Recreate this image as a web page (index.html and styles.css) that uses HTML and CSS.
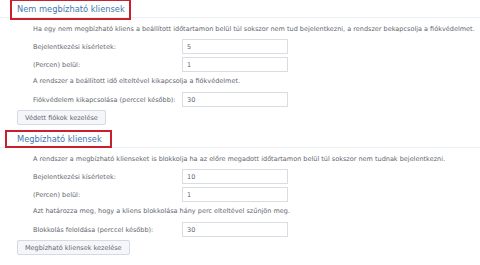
FILE: index.html
```html
<!DOCTYPE html>
<html lang="hu">
<head>
    <meta charset="UTF-8">
    <title>Automatikus blokkolás</title>
    <link rel="stylesheet" href="styles.css">
</head>
<body>
    <div class="page">
        <div class="section">
            <div class="section-head">
                <span class="title title-first">Nem megbízható kliensek</span>
            </div>
            <div class="section-body">
                <p class="desc">Ha egy nem megbízható kliens a beállított időtartamon belül túl sokszor nem tud bejelentkezni, a rendszer bekapcsolja a fiókvédelmet.</p>
                <div class="field">
                    <label>Bejelentkezési kísérletek:</label>
                    <input type="text" value="5">
                </div>
                <div class="field">
                    <label>(Percen) belül:</label>
                    <input type="text" value="1">
                </div>
                <p class="note">A rendszer a beállított idő elteltével kikapcsolja a fiókvédelmet.</p>
                <div class="field">
                    <label>Fiókvédelem kikapcsolása (perccel később):</label>
                    <input type="text" value="30">
                </div>
            </div>
            <button class="btn">Védett fiókok kezelése</button>
        </div>

        <div class="section">
            <div class="section-head">
                <span class="title title-second">Megbízható kliensek</span>
            </div>
            <div class="section-body">
                <p class="desc">A rendszer a megbízható klienseket is blokkolja ha az előre megadott időtartamon belül túl sokszor nem tudnak bejelentkezni.</p>
                <div class="field">
                    <label>Bejelentkezési kísérletek:</label>
                    <input type="text" value="10">
                </div>
                <div class="field">
                    <label>(Percen) belül:</label>
                    <input type="text" value="1">
                </div>
                <p class="note">Azt határozza meg, hogy a kliens blokkolása hány perc elteltével szűnjön meg.</p>
                <div class="field">
                    <label>Blokkolás feloldása (perccel később):</label>
                    <input type="text" value="30">
                </div>
            </div>
            <button class="btn">Megbízható kliensek kezelése</button>
        </div>
    </div>
</body>
</html>
```

FILE: styles.css
```css
:root {
    --title-color: #4277ad;
    --text-color: #5f6670;
    --line-color: #eceff2;
    --input-border: #d9dde2;
    --mark-color: #c9202f;
}

* {
    margin: 0;
    padding: 0;
    box-sizing: border-box;
}

body {
    font-family: 'DejaVu Sans', Verdana, sans-serif;
    background-color: white;
    color: var(--text-color);
    font-size: 6.5px;
}

.page {
    width: 480px;
    height: 265px;
    overflow: hidden;
}

.section {
    height: 130px;
}

.section-head {
    border-bottom: 1px solid var(--line-color);
    height: 18px;
    display: flex;
    align-items: flex-end;
}

.title {
    display: inline-block;
    color: var(--title-color);
    font-size: 8.3px;
    border: 2px solid var(--mark-color);
}

.title-first {
    margin-left: 10px;
    padding: 0 4px 0 5px;
    margin-bottom: -3px;
    height: 21px;
    line-height: 17px;
}

.title-second {
    margin-left: 5px;
    padding: 0 8px 0 10px;
    margin-bottom: -1px;
    height: 18px;
    line-height: 14px;
}

.section-body {
    padding-left: 33px;
}

.desc {
    margin-top: 5px;
    height: 13px;
    line-height: 13px;
}

.note {
    height: 18px;
    line-height: 18px;
}

.field {
    display: flex;
    align-items: center;
    height: 15px;
    margin-top: 3px;
}

.note + .field {
    margin-top: 2px;
}

.field label {
    width: 149px;
}

.field input {
    width: 106px;
    height: 15px;
    border: 1px solid var(--input-border);
    padding-left: 4px;
    font-family: inherit;
    font-size: 6.5px;
    color: var(--text-color);
}

.btn {
    margin: 3px 0 0 17px;
    height: 15px;
    padding: 0 7px;
    background-color: #f4f6f9;
    border: 1px solid #d3dae3;
    border-radius: 2px;
    font-family: inherit;
    font-size: 6.5px;
    color: var(--text-color);
}
```
